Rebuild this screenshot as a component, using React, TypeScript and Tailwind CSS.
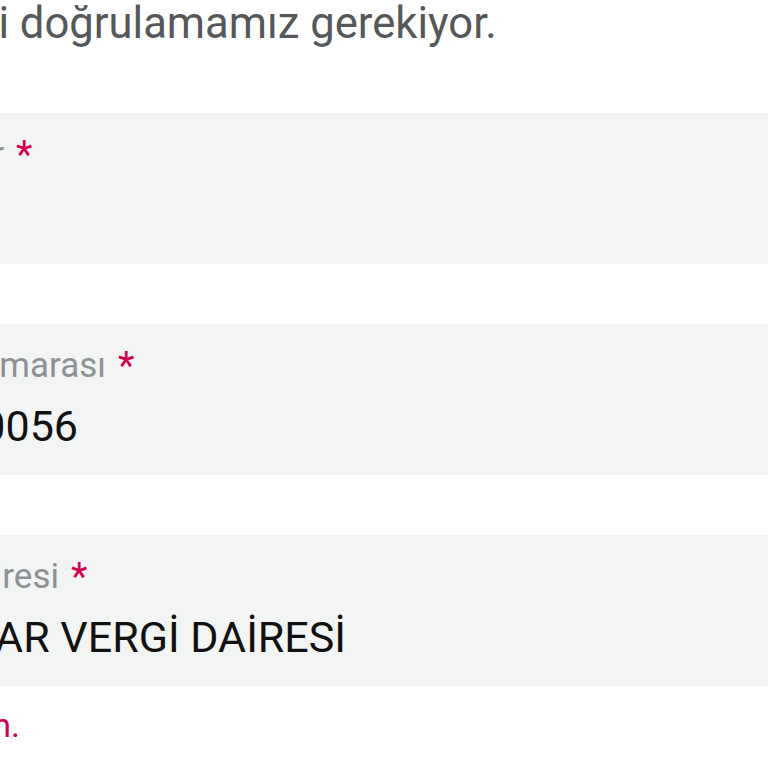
import React from "react";

function Cut({ w, children }: { w: number; children: React.ReactNode }) {
  return (
    <span className="inline-flex justify-end overflow-hidden align-bottom" style={{ width: w }}>
      <span className="shrink-0 whitespace-pre">{children}</span>
    </span>
  );
}

function Field({ labelPrefix, labelW, value, valueW }: { labelPrefix: string; labelW: number; value?: string; valueW?: number }) {
  return (
    <div className="h-[151px] bg-[#f3f4f4] pt-[20px]">
      <div className="flex items-center whitespace-nowrap text-[35px] leading-[44px] text-[#8e9194]">
        <Cut w={labelW}>{labelPrefix}</Cut>
        <span className="ml-[12px] text-[38px] text-[#d4004f]">*</span>
      </div>
      <div className="mt-[14px] flex h-[48px] items-center whitespace-nowrap text-[43px] leading-[48px] text-[#111]">
        {value !== undefined && valueW !== undefined ? <Cut w={valueW}>{value}</Cut> : null}
      </div>
    </div>
  );
}

export default function App() {
  return (
    <div className="h-[768px] w-[768px] overflow-hidden bg-white" style={{ fontFamily: "Roboto, 'Noto Sans', sans-serif" }}>
      <div className="flex h-[48px] items-center whitespace-nowrap text-[43.6px] text-[#555759]">
        <Cut w={9}>bilgilerinizi</Cut>
        <span className="whitespace-pre"> doğrulamamız gerekiyor.</span>
      </div>
      <div className="mt-[65px] flex flex-col gap-[60px]">
        <Field labelPrefix="Firma Unvanlar" labelW={4} />
        <Field labelPrefix="Vergi Numarası" labelW={106} value="1234567890056" valueW={78} />
        <Field labelPrefix="Vergi Dairesi" labelW={59} value="ALEMDAR VERGİ DAİRESİ" valueW={346} />
      </div>
      <div className="mt-[14px] flex whitespace-nowrap text-[34px] text-[#d4004f]">
        <Cut w={20}>Lütfen vergi dairesini kontrol edin.</Cut>
      </div>
    </div>
  );
}
